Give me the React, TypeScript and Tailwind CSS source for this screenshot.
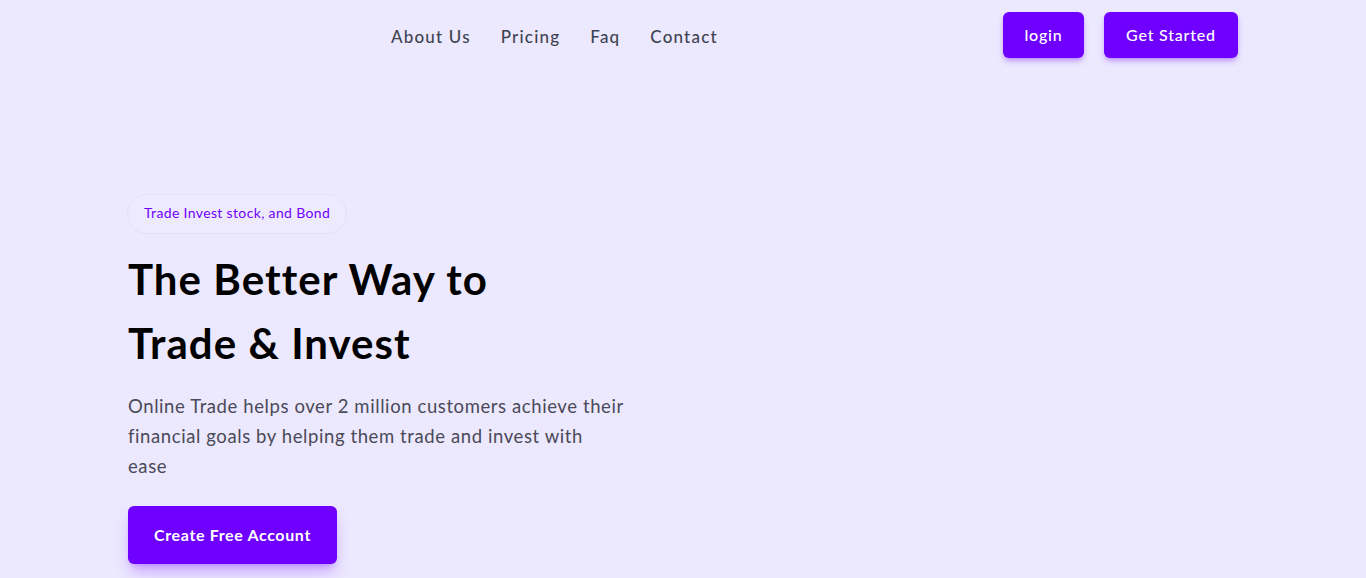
import React from "react";

export default function App() {
  return (
    <div
      className="min-h-[578px] w-full bg-[#ece8fe] overflow-hidden"
      style={{ fontFamily: "Lato, 'Open Sans', sans-serif" }}
    >
      <header className="mx-auto w-[1110px] pt-3 flex items-start">
        <nav className="ml-[263px] mt-[12px] flex gap-[30px] text-[17px] font-medium tracking-[0.07em] text-[#3f4452]">
          <a href="#">About Us</a>
          <a href="#">Pricing</a>
          <a href="#">Faq</a>
          <a href="#">Contact</a>
        </nav>
        <div className="ml-auto flex gap-5">
          <button className="h-[46px] w-[81px] rounded-md bg-[#6f00ff] text-[16px] font-medium tracking-[0.05em] text-white shadow-md shadow-[#6f00ff]/30">
            login
          </button>
          <button className="h-[46px] w-[134px] rounded-md bg-[#6f00ff] text-[16px] font-medium tracking-[0.05em] text-white shadow-md shadow-[#6f00ff]/30">
            Get Started
          </button>
        </div>
      </header>

      <main className="mx-auto w-[1110px] pt-[136px]">
        <div className="-ml-px inline-flex h-[40px] items-center rounded-full border border-[#e4e0f6] bg-[#eeeafe] px-4 pb-[3px] text-[14px] tracking-[0.025em] text-[#7000ff]">
          Trade Invest stock, and Bond
        </div>
        <h1 className="mt-[13px] text-[42px] font-bold leading-[64px] tracking-[0.025em] text-black">
          The Better Way to
          <br />
          Trade &amp; Invest
        </h1>
        <p className="mt-[16px] w-[498px] text-[18.5px] leading-[30px] tracking-[0.032em] text-[#4a4a58]">
          Online Trade helps over 2 million customers achieve their financial goals by helping them trade and invest with ease
        </p>
        <button className="mt-[25px] h-[58px] w-[209px] rounded-md bg-[#6f00ff] text-[16px] font-bold tracking-[0.04em] text-white shadow-lg shadow-[#6f00ff]/30">
          Create Free Account
        </button>
      </main>
    </div>
  );
}
